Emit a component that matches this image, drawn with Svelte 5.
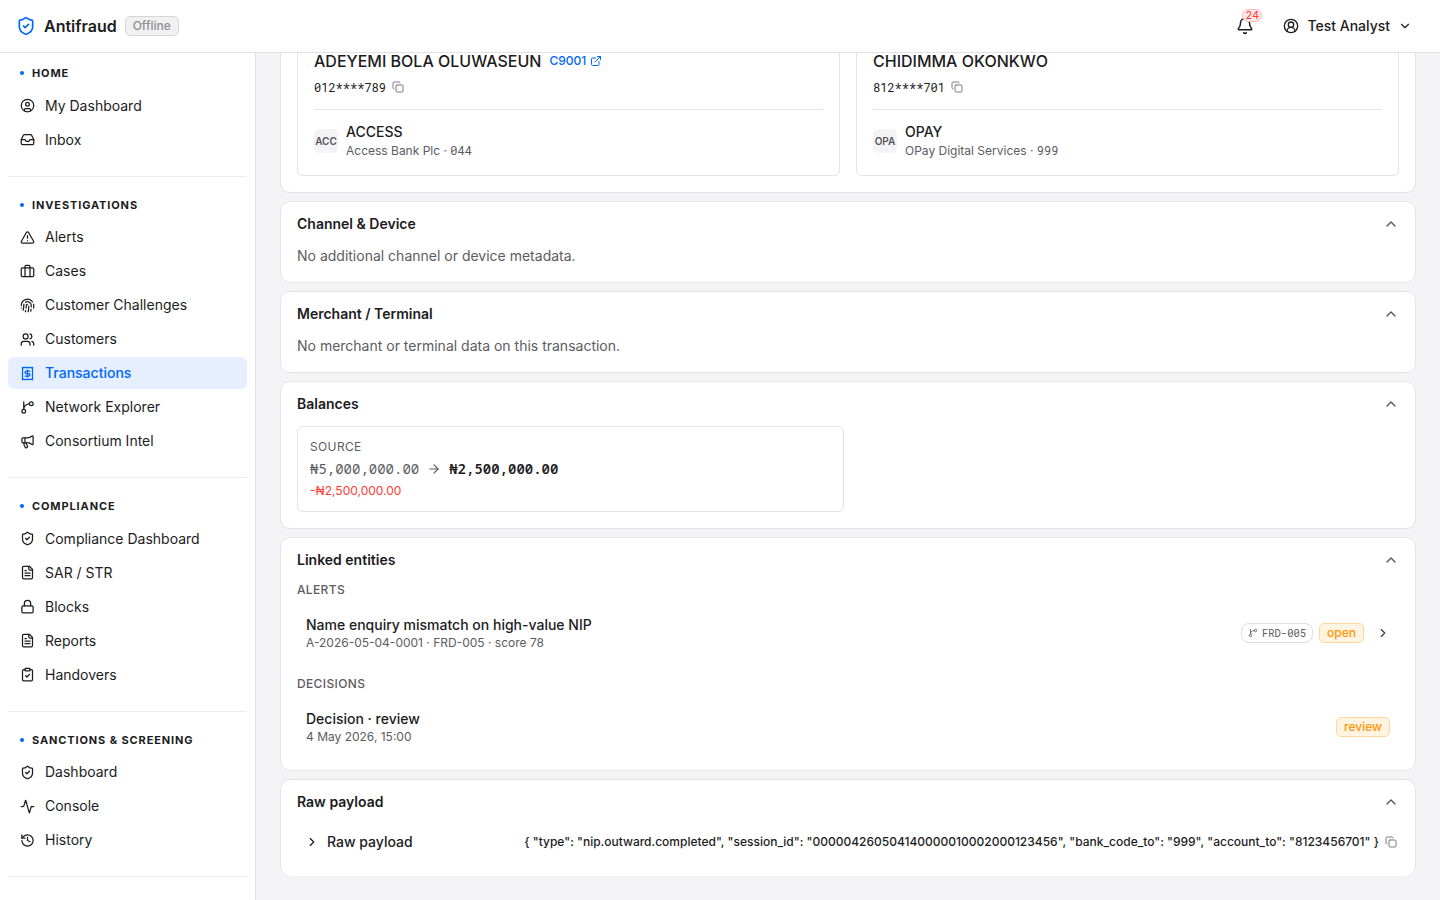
<script lang="ts">
  interface NavItem {
    label: string
    icon: string
    active?: boolean
  }

  interface NavSection {
    title: string
    items: NavItem[]
  }

  interface Party {
    name: string
    customerId?: string
    account: string
    bank: string
    bankName: string
    bankCode: string
  }

  const icons: Record<string, string[]> = {
    shieldCheck: [
      'M20 13c0 5-3.500 7.500-7.660 8.950a1 1 0 0 1-.67-.01C7.500 20.500 4 18 4 13V6a1 1 0 0 1 1-1c2 0 4.500-1.200 6.240-2.720a1.170 1.170 0 0 1 1.520 0C14.510 3.810 17 5 19 5a1 1 0 0 1 1 1z',
      'm9 12 2 2 4-4',
    ],
    circleUser: [
      'M2 12a10 10 0 1 0 20 0a10 10 0 1 0-20 0',
      'M9 10a3 3 0 1 0 6 0a3 3 0 1 0-6 0',
      'M7 20.662V19a2 2 0 0 1 2-2h6a2 2 0 0 1 2 2v1.662',
    ],
    circleUserRound: [
      'M2 12a10 10 0 1 0 20 0a10 10 0 1 0-20 0',
      'M8 10a4 4 0 1 0 8 0a4 4 0 1 0-8 0',
      'M18 20a6 6 0 0 0-12 0',
    ],
    inbox: [
      'M22 12h-6l-2 3h-4l-2-3H2',
      'M5.450 5.110 2 12v6a2 2 0 0 0 2 2h16a2 2 0 0 0 2-2v-6l-3.450-6.890A2 2 0 0 0 16.760 4H7.240a2 2 0 0 0-1.790 1.110z',
    ],
    alert: [
      'm21.730 18-8-14a2 2 0 0 0-3.480 0l-8 14A2 2 0 0 0 4 21h16a2 2 0 0 0 1.730-3',
      'M12 9v4',
      'M12 17h.01',
    ],
    briefcase: [
      'M16 20V4a2 2 0 0 0-2-2h-4a2 2 0 0 0-2 2v16',
      'M4 6h16a2 2 0 0 1 2 2v10a2 2 0 0 1-2 2H4a2 2 0 0 1-2-2V8a2 2 0 0 1 2-2z',
    ],
    fingerprint: [
      'M12 10a2 2 0 0 0-2 2c0 1.020-.1 2.510-.26 4',
      'M14 13.120c0 2.380 0 6.380-1 8.880',
      'M17.290 21.020c.12-.6.43-2.300.5-3.020',
      'M2 12a10 10 0 0 1 18-6',
      'M2 16h.01',
      'M21.800 16c.2-2 .131-5.354 0-6',
      'M5 19.500C5.500 18 6 15 6 12a6 6 0 0 1 .34-2',
      'M8.650 22c.21-.66.45-1.320.57-2',
      'M9 6.800a6 6 0 0 1 9 5.200v2',
    ],
    users: [
      'M16 21v-2a4 4 0 0 0-4-4H6a4 4 0 0 0-4 4v2',
      'M16 3.128a4 4 0 0 1 0 7.744',
      'M22 21v-2a4 4 0 0 0-3-3.870',
      'M5 7a4 4 0 1 0 8 0a4 4 0 1 0-8 0',
    ],
    receipt: [
      'M4 2v20l2-1 2 1 2-1 2 1 2-1 2 1 2-1 2 1V2l-2 1-2-1-2 1-2-1-2 1-2-1-2 1Z',
      'M16 8h-6a2 2 0 1 0 0 4h4a2 2 0 1 1 0 4H8',
      'M12 17.500v-11',
    ],
    branch: [
      'M15 6a9 9 0 0 0-9 9V3',
      'M15 6a3 3 0 1 0 6 0a3 3 0 1 0-6 0',
      'M3 18a3 3 0 1 0 6 0a3 3 0 1 0-6 0',
    ],
    megaphone: [
      'M11 6a13 13 0 0 0 8.400-2.800A1 1 0 0 1 21 4v12a1 1 0 0 1-1.600.8A13 13 0 0 0 11 14H5a2 2 0 0 1-2-2V8a2 2 0 0 1 2-2z',
      'M6 14a12 12 0 0 0 2.400 7.200 2 2 0 0 0 3.200-2.400A8 8 0 0 1 10 14',
      'M8 6v8',
    ],
    fileText: [
      'M15 2H6a2 2 0 0 0-2 2v16a2 2 0 0 0 2 2h12a2 2 0 0 0 2-2V7Z',
      'M14 2v4a2 2 0 0 0 2 2h4',
      'M10 9H8',
      'M16 13H8',
      'M16 17H8',
    ],
    lock: [
      'M5 11h14a2 2 0 0 1 2 2v7a2 2 0 0 1-2 2H5a2 2 0 0 1-2-2v-7a2 2 0 0 1 2-2z',
      'M7 11V7a5 5 0 0 1 10 0v4',
    ],
    clipboard: [
      'M9 2h6a1 1 0 0 1 1 1v2a1 1 0 0 1-1 1H9a1 1 0 0 1-1-1V3a1 1 0 0 1 1-1z',
      'M16 4h2a2 2 0 0 1 2 2v14a2 2 0 0 1-2 2H6a2 2 0 0 1-2-2V6a2 2 0 0 1 2-2h2',
      'm9 14 2 2 4-4',
    ],
    activity: [
      'M22 12h-2.480a2 2 0 0 0-1.930 1.460l-2.350 8.360a.25.25 0 0 1-.48 0L9.240 2.180a.25.25 0 0 0-.48 0l-2.350 8.360A2 2 0 0 1 4.490 12H2',
    ],
    history: ['M3 12a9 9 0 1 0 9-9 9.750 9.750 0 0 0-6.740 2.740L3 8', 'M3 3v5h5', 'M12 7v5l4 2'],
    bell: [
      'M10.268 21a2 2 0 0 0 3.464 0',
      'M3.262 15.326A1 1 0 0 0 4 17h16a1 1 0 0 0 .74-1.673C19.410 13.956 18 12.499 18 8A6 6 0 0 0 6 8c0 4.499-1.411 5.956-2.738 7.326',
    ],
    copy: [
      'M10 8h10a2 2 0 0 1 2 2v10a2 2 0 0 1-2 2H10a2 2 0 0 1-2-2V10a2 2 0 0 1 2-2z',
      'M4 16c-1.100 0-2-.9-2-2V4c0-1.100.9-2 2-2h10c1.100 0 2 .9 2 2',
    ],
    external: ['M15 3h6v6', 'M10 14 21 3', 'M18 13v6a2 2 0 0 1-2 2H5a2 2 0 0 1-2-2V8a2 2 0 0 1 2-2h6'],
    arrow: ['M5 12h14', 'm12 5 7 7-7 7'],
    up: ['m18 15-6-6-6 6'],
    down: ['m6 9 6 6 6-6'],
    right: ['m9 18 6-6-6-6'],
  };

  const sections: NavSection[] = [
    {
      title: 'Home',
      items: [
        {label: 'My Dashboard', icon: 'circleUser'},
        {label: 'Inbox', icon: 'inbox'},
      ],
    },
    {
      title: 'Investigations',
      items: [
        {label: 'Alerts', icon: 'alert'},
        {label: 'Cases', icon: 'briefcase'},
        {label: 'Customer Challenges', icon: 'fingerprint'},
        {label: 'Customers', icon: 'users'},
        {label: 'Transactions', icon: 'receipt', active: true},
        {label: 'Network Explorer', icon: 'branch'},
        {label: 'Consortium Intel', icon: 'megaphone'},
      ],
    },
    {
      title: 'Compliance',
      items: [
        {label: 'Compliance Dashboard', icon: 'shieldCheck'},
        {label: 'SAR / STR', icon: 'fileText'},
        {label: 'Blocks', icon: 'lock'},
        {label: 'Reports', icon: 'fileText'},
        {label: 'Handovers', icon: 'clipboard'},
      ],
    },
    {
      title: 'Sanctions & Screening',
      items: [
        {label: 'Dashboard', icon: 'shieldCheck'},
        {label: 'Console', icon: 'activity'},
        {label: 'History', icon: 'history'},
      ],
    },
  ];

  const parties: Party[] = [
    {
      name: 'ADEYEMI BOLA OLUWASEUN',
      customerId: 'C9001',
      account: '012****789',
      bank: 'ACCESS',
      bankName: 'Access Bank Plc',
      bankCode: '044',
    },
    {
      name: 'CHIDIMMA OKONKWO',
      account: '812****701',
      bank: 'OPAY',
      bankName: 'OPay Digital Services',
      bankCode: '999',
    },
  ];

  const payload =
    '{ "type": "nip.outward.completed", "session_id": "000004260504140000010002000123456", "bank_code_to": "999", "account_to": "8123456701" }';
</script>

{#snippet icon(name: string, size: number)}
  <svg width={size} height={size} viewBox="0 0 24 24" fill="none" stroke="currentColor" stroke-width="2" stroke-linecap="round" stroke-linejoin="round" aria-hidden="true">
    {#each icons[name] as d}
      <path {d} />
    {/each}
  </svg>
{/snippet}

{#snippet cardHead(title: string)}
  <header class="card-head">
    <h2>{title}</h2>
    <button class="toggle" aria-label="Toggle section">{@render icon('up', 16)}</button>
  </header>
{/snippet}

<div class="shell">
  <header class="topbar">
    <div class="brand">
      <span class="logo">{@render icon('shieldCheck', 20)}</span>
      <span class="brand-name">Antifraud</span>
      <span class="status">Offline</span>
    </div>
    <div class="actions">
      <button class="bell" aria-label="Notifications">
        {@render icon('bell', 18)}
        <span class="count">24</span>
      </button>
      <button class="account">
        {@render icon('circleUserRound', 16)}
        <span>Test Analyst</span>
        {@render icon('down', 14)}
      </button>
    </div>
  </header>

  <div class="body">
    <nav class="sidebar">
      {#each sections as section (section.title)}
        <section class="nav-section">
          <h3 class="nav-title">{section.title}</h3>
          <ul>
            {#each section.items as item (item.label)}
              <li class="nav-item" class:active={item.active}>
                {@render icon(item.icon, 15)}
                <span>{item.label}</span>
              </li>
            {/each}
          </ul>
        </section>
      {/each}
    </nav>

    <main class="content">
      <section class="card parties">
        {#each parties as party (party.name)}
          <article class="party">
            <div class="party-name">
              <span>{party.name}</span>
              {#if party.customerId}
                <a class="customer" href="#customer">{party.customerId} {@render icon('external', 12)}</a>
              {/if}
            </div>
            <div class="account-no">
              <span class="mono">{party.account}</span>
              <span class="copy">{@render icon('copy', 12)}</span>
            </div>
            <div class="bank">
              <span class="bank-badge">{party.bank.slice(0, 3)}</span>
              <div>
                <div class="bank-short">{party.bank}</div>
                <div class="bank-full">{party.bankName} · <span class="mono">{party.bankCode}</span></div>
              </div>
            </div>
          </article>
        {/each}
      </section>

      <section class="card">
        {@render cardHead('Channel & Device')}
        <p class="empty">No additional channel or device metadata.</p>
      </section>

      <section class="card">
        {@render cardHead('Merchant / Terminal')}
        <p class="empty">No merchant or terminal data on this transaction.</p>
      </section>

      <section class="card">
        {@render cardHead('Balances')}
        <div class="balance">
          <div class="balance-label">Source</div>
          <div class="balance-row">
            <span class="amount">₦5,000,000.00</span>
            {@render icon('arrow', 14)}
            <span class="amount after">₦2,500,000.00</span>
          </div>
          <div class="delta">-₦2,500,000.00</div>
        </div>
      </section>

      <section class="card">
        {@render cardHead('Linked entities')}
        <h4 class="group">Alerts</h4>
        <div class="entity">
          <div>
            <div class="entity-title">Name enquiry mismatch on high-value NIP</div>
            <div class="entity-sub">A-2026-05-04-0001 · FRD-005 · score 78</div>
          </div>
          <div class="entity-side">
            <span class="rule mono">{@render icon('branch', 10)}FRD-005</span>
            <span class="tag">open</span>
            <span class="go">{@render icon('right', 14)}</span>
          </div>
        </div>
        <h4 class="group second">Decisions</h4>
        <div class="entity">
          <div>
            <div class="entity-title">Decision · review</div>
            <div class="entity-sub">4 May 2026, 15:00</div>
          </div>
          <div class="entity-side">
            <span class="tag">review</span>
          </div>
        </div>
      </section>

      <section class="card raw">
        {@render cardHead('Raw payload')}
        <div class="payload">
          {@render icon('right', 14)}
          <span class="payload-title">Raw payload</span>
          <code class="payload-text">{payload}</code>
          <span class="copy">{@render icon('copy', 12)}</span>
        </div>
      </section>
    </main>
  </div>
</div>

<style>
  :global(body) {
    margin: 0;
  }

  .shell {
    display: flex;
    flex-direction: column;
    height: 100vh;
    overflow: hidden;
    background: #f4f4f6;
    color: #1c1c1e;
    font-family: Inter, 'Liberation Sans', sans-serif;
    font-size: 14px;
    line-height: 20px;
  }

  svg {
    display: block;
    flex: none;
  }

  button {
    padding: 0;
    border: 0;
    background: none;
    color: inherit;
    font: inherit;
    cursor: pointer;
  }

  h2,
  h3,
  h4,
  p,
  ul {
    margin: 0;
    padding: 0;
    list-style: none;
  }

  .mono {
    font-family: 'Roboto Mono', 'Liberation Mono', monospace;
  }

  .topbar {
    display: flex;
    align-items: center;
    justify-content: space-between;
    flex: none;
    box-sizing: border-box;
    height: 53px;
    padding: 0 28px 0 16px;
    background: #fff;
    border-bottom: 1px solid #e2e2e5;
  }

  .brand,
  .actions,
  .account {
    display: flex;
    align-items: center;
  }

  .brand {
    gap: 8px;
  }

  .logo {
    color: #0066ff;
  }

  .brand-name {
    font-size: 16px;
    font-weight: 600;
  }

  .status {
    box-sizing: border-box;
    height: 20px;
    padding: 0 7px;
    border: 1px solid #d6d6d8;
    border-radius: 5px;
    background: #f1f1f2;
    color: #8e8e93;
    font-size: 12px;
    font-weight: 500;
    line-height: 18px;
  }

  .actions {
    gap: 29px;
  }

  .bell {
    position: relative;
  }

  .count {
    position: absolute;
    top: -8px;
    left: 6px;
    box-sizing: border-box;
    height: 13px;
    padding: 0 2px;
    border: 1px solid #ffb8b4;
    border-radius: 7px;
    background: #ffe9e8;
    color: #ff3b30;
    font-size: 11px;
    line-height: 11px;
  }

  .account {
    gap: 8px;
    font-weight: 500;
  }

  .body {
    display: flex;
    flex: 1;
    min-height: 0;
  }

  .sidebar {
    box-sizing: border-box;
    width: 256px;
    flex: none;
    padding: 12.4px 8px 0;
    overflow: hidden;
    background: #fff;
    border-right: 1px solid #e2e2e5;
  }

  .nav-section {
    padding-bottom: 20px;
    margin-bottom: 20px;
    border-bottom: 1px solid #ececee;
  }

  .nav-title {
    display: flex;
    align-items: center;
    gap: 8px;
    padding-left: 12px;
    margin-bottom: 8px;
    font-size: 11px;
    font-weight: 700;
    line-height: 16.5px;
    letter-spacing: 0.88px;
    text-transform: uppercase;
  }

  .nav-title::before {
    content: '';
    width: 4px;
    height: 4px;
    margin-bottom: 1px;
    border-radius: 50%;
    background: #0066ff;
  }

  .nav-item {
    display: flex;
    align-items: center;
    gap: 10px;
    height: 32px;
    padding: 0 12px;
    border-radius: 6px;
  }

  .nav-item + .nav-item {
    margin-top: 2px;
  }

  .nav-item.active {
    background: #e5efff;
    color: #0066ff;
    font-weight: 500;
  }

  .content {
    display: flex;
    flex-direction: column;
    justify-content: flex-end;
    gap: 8px;
    flex: 1;
    min-width: 0;
    padding: 0 24px 24px;
    overflow: hidden;
  }

  .card {
    box-sizing: border-box;
    flex: none;
    padding: 0 16px 16px;
    background: #fff;
    border: 1px solid #e4e4e7;
    border-radius: 10px;
  }

  .parties {
    display: grid;
    grid-template-columns: 1fr 1fr;
    gap: 16px;
    padding-top: 16px;
  }

  .party {
    padding: 16px;
    border: 1px solid #e4e4e7;
    border-radius: 6px;
  }

  .party-name {
    display: flex;
    align-items: center;
    gap: 8px;
    font-size: 16px;
    font-weight: 500;
    line-height: 16px;
  }

  .customer {
    display: flex;
    align-items: center;
    gap: 4px;
    color: #0066ff;
    font-size: 12px;
    text-decoration: none;
  }

  .account-no {
    display: flex;
    align-items: center;
    gap: 6px;
    padding: 8px 0 12px;
    border-bottom: 1px solid #e4e4e7;
    font-size: 12px;
  }

  .copy {
    color: #7c7c80;
  }

  .bank {
    display: flex;
    align-items: center;
    gap: 8px;
    height: 38px;
    padding-top: 12px;
    margin-bottom: -1px;
  }

  .bank-badge {
    width: 24px;
    height: 24px;
    border-radius: 5px;
    background: #f4f4f6;
    color: #55555a;
    font-size: 10px;
    font-weight: 600;
    line-height: 24px;
    text-align: center;
  }

  .bank-short,
  .entity-title {
    font-weight: 500;
  }

  .bank-full,
  .entity-sub {
    color: #5c5c60;
    font-size: 12px;
  }

  .bank-full {
    line-height: 18px;
  }

  .bank-full .mono {
    line-height: 1;
  }

  .entity-sub {
    line-height: 16px;
  }

  .card-head {
    display: flex;
    align-items: center;
    justify-content: space-between;
    height: 44px;
  }

  .card-head h2 {
    font-size: 14px;
    font-weight: 600;
  }

  .toggle {
    color: #55555a;
  }

  .empty {
    color: #5c5c60;
  }

  .balance {
    box-sizing: border-box;
    width: 547px;
    padding: 11px 12px;
    border: 1px solid #e4e4e7;
    border-radius: 6px;
  }

  .balance-label {
    color: #5c5c60;
    font-size: 12px;
    line-height: 18px;
    letter-spacing: 0.36px;
    text-transform: uppercase;
  }

  .balance-row {
    display: flex;
    align-items: center;
    gap: 8px;
    height: 26px;
    color: #5c5c60;
  }

  .amount {
    font-family: 'Noto Sans Mono', 'Roboto Mono', monospace;
  }

  .after {
    color: #1c1c1e;
    font-weight: 600;
  }

  .delta {
    color: #ff3b30;
    font-size: 12px;
    line-height: 18px;
  }

  .group {
    color: #5c5c60;
    font-size: 12px;
    font-weight: 500;
    line-height: 16px;
    letter-spacing: 0.36px;
    text-transform: uppercase;
  }

  .second {
    margin-top: 16px;
  }

  .entity {
    display: flex;
    align-items: center;
    justify-content: space-between;
    height: 54px;
    margin-top: 8px;
    padding: 0 9px;
  }

  .entity-side {
    display: flex;
    align-items: center;
    gap: 6px;
  }

  .rule {
    display: flex;
    align-items: center;
    gap: 4px;
    box-sizing: border-box;
    height: 20px;
    padding: 0 6px;
    border: 1px solid #dedee1;
    border-radius: 8px;
    color: #5c5c60;
    font-size: 10.5px;
  }

  .tag {
    box-sizing: border-box;
    height: 20px;
    padding: 0 7px;
    border: 1px solid #ffd79c;
    border-radius: 5px;
    background: #fff3e2;
    color: #ff9500;
    font-size: 12px;
    font-weight: 500;
    line-height: 18px;
  }

  .go {
    margin-left: 6px;
    color: #3f3f44;
  }

  .raw {
    height: 97px;
    padding-bottom: 0;
    border-bottom: 0;
  }

  .payload {
    display: flex;
    align-items: center;
    height: 36px;
    padding: 0 2px 0 8px;
  }

  .payload-title {
    flex: 1;
    padding-left: 8px;
    font-weight: 500;
  }

  .payload-text {
    padding-right: 6px;
    font-family: inherit;
    font-size: 12px;
    font-weight: 500;
    white-space: nowrap;
  }
</style>
